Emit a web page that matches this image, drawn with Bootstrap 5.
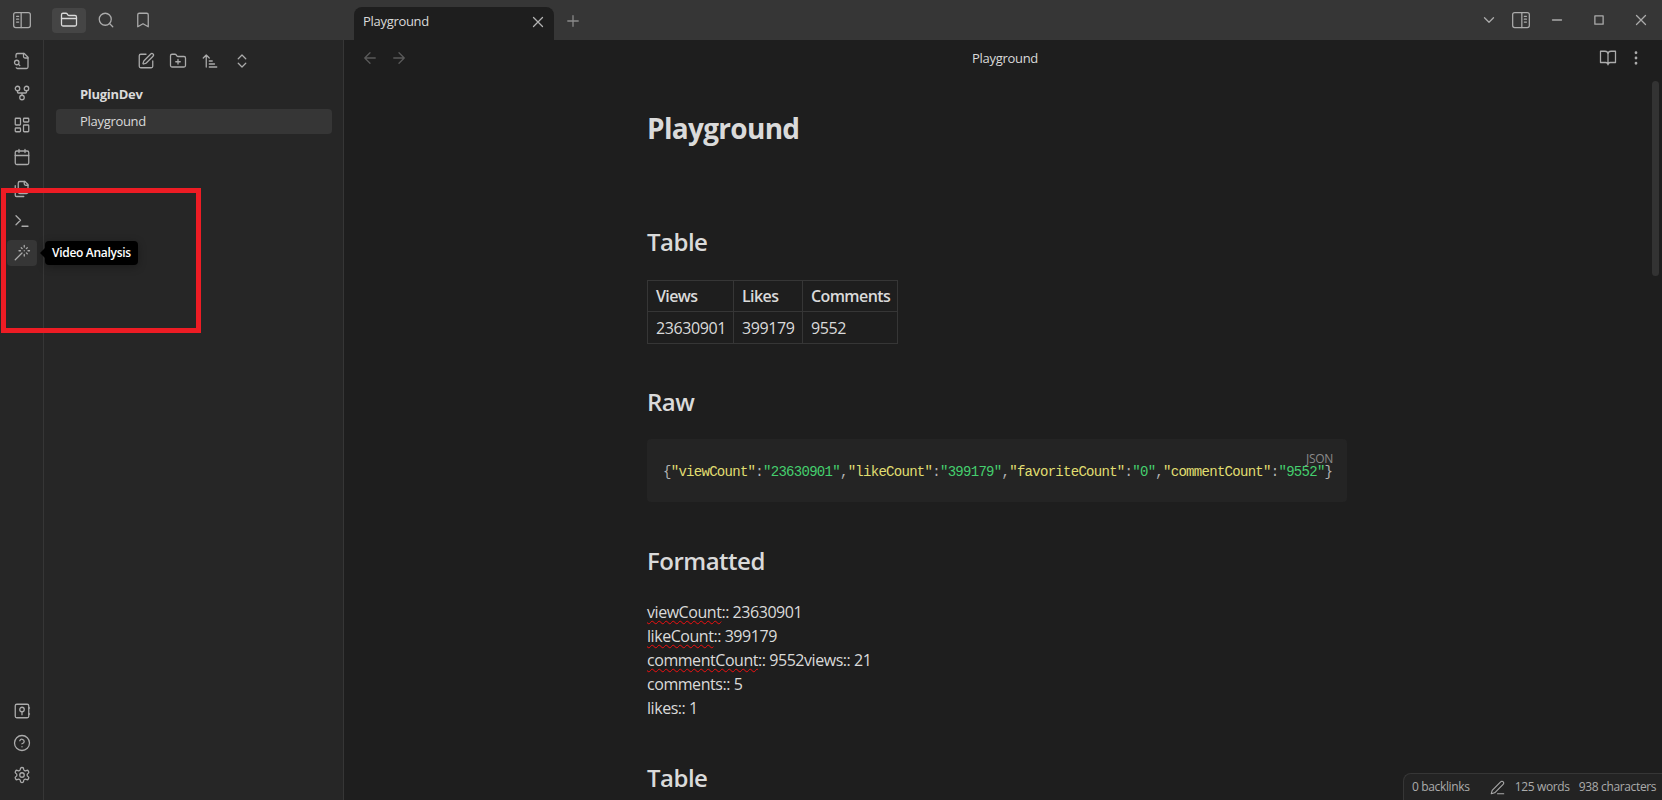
<!DOCTYPE html>
<html lang="en">
<head>
  <meta charset="UTF-8">
  <title>Playground - PluginDev</title>
  <link href="https://cdn.jsdelivr.net/npm/bootstrap@5.3.0/dist/css/bootstrap.min.css" rel="stylesheet">
  <style>
    html, body { height: 100%; overflow: hidden; }
    body {
      background: #1e1e1e;
      color: #dadada;
      font-family: "Open Sans", "Noto Sans", sans-serif;
      font-size: 16px;
      letter-spacing: -.45px;
    }
    .ico { width: 18px; height: 18px; fill: none; stroke: currentColor; stroke-width: 1.7; stroke-linecap: round; stroke-linejoin: round; flex: none; display: block; }
    .ico-wide { width: 20px; height: 20px; stroke-width: 1.5; }
    .app-shell { position: relative; height: 800px; }

    /* title bar */
    .title-bar { height: 40px; background: #363636; color: #ababab; }
    .title-left { width: 354px; padding-left: 12px; }
    .top-btn { width: 34px; height: 25px; border-radius: 4px; margin-right: 3px; }
    .top-btn.is-on { background: #454545; color: #dadada; }
    .top-gap { margin-left: 20px; }
    .tab-active { width: 200px; height: 33px; background: #1e1e1e; border-radius: 8px 8px 0 0; padding: 0 7px 3px 9px; margin-top: 7px; color: #dadada; font-size: 13px; letter-spacing: -.3px; }
    .tab-close { color: #b3b3b3; }
    .tab-plus { margin-left: 10px; padding-top: 2px; color: #8a8a8a; }
    .win-btn { width: 42px; color: #ababab; }
    .win-panel { width: 30px; }
    .win-chevron { margin-right: 8px; }

    /* ribbon */
    .ribbon { width: 44px; background: #262626; border-right: 1px solid #363636; padding-top: 8px; padding-bottom: 12px; color: #ababab; }
    .rib-btn { width: 30px; height: 26px; border-radius: 4px; margin-bottom: 6px; }
    .rib-btn:last-child { margin-bottom: 0; }
    .rib-btn.is-on { background: #363636; }

    /* file explorer */
    .file-pane { width: 300px; background: #262626; border-right: 1px solid #363636; padding: 8px 11px 0 12px; font-size: 13px; letter-spacing: -.3px; }
    .file-tools { height: 26px; gap: 14px; color: #ababab; margin-right: 1px; }
    .vault-name { font-weight: 700; padding: 11px 0 0 24px; height: 35px; line-height: 18px; }
    .file-row { height: 25px; background: #363636; border-radius: 4px; padding-left: 24px; line-height: 25px; font-weight: 500; }

    /* note */
    .note-pane { background: #1e1e1e; min-width: 0; }
    .view-head { height: 36px; padding: 0 17px 0 17px; font-size: 13px; letter-spacing: -.3px; }
    .view-arrows { color: #5a5a5a; gap: 11px; width: 50px; }
    .view-title { color: #dadada; margin-top: 1px; }
    .view-acts { color: #ababab; gap: 10px; }
    .note-scroll { height: 724px; overflow: hidden; padding-right: 12px; }
    .note-body { width: 700px; margin: 0 auto; padding-top: 30px; }
    .note-body h1 { font-size: 28px; font-weight: 700; line-height: 44px; margin: 0 0 75px; letter-spacing: -.7px; }
    .note-body h2 { font-size: 24px; font-weight: 600; line-height: 34px; margin: 0 0 20px; letter-spacing: -.5px; }
    .note-body h2.table-head { margin-bottom: 21px; }
    .stat-table { width: 250px; table-layout: fixed; margin: 0 0 41px; --bs-table-bg: transparent; --bs-table-color: #dadada; --bs-border-color: #363636; font-size: 16px; }
    .stat-table th, .stat-table td { padding: 0 8px; vertical-align: middle; }
    .stat-table th { height: 31px; font-weight: 600; letter-spacing: -.6px; }
    .stat-table td { height: 32px; font-weight: 400; letter-spacing: -.4px; }
    .col-views { width: 86px; }
    .col-likes { width: 69px; }
    .col-comments { width: 95px; }
    .code-box { background: #242424; border-radius: 4px; height: 63px; padding: 13px 14px 0 16px; margin-bottom: 42px; white-space: nowrap; }
    .code-lang { font-size: 12px; line-height: 13px; letter-spacing: -.3px; color: #8a8a8a; text-align: right; }
    .code-line { display: block; margin-top: -1px; font-family: "Liberation Mono", monospace; font-size: 14px; line-height: 17px; letter-spacing: -.71px; color: #b3b3b3; }
    .tok-key { color: #e0de71; }
    .tok-val { color: #44cf6e; }
    .data-lines { line-height: 24px; margin-top: 22px; margin-bottom: 41px; }
    .typo { text-decoration: underline wavy #f01010 1px; text-underline-offset: 2px; text-decoration-skip-ink: none; }

    /* overlays */
    .scroll-thumb { position: absolute; right: 3px; top: 81px; width: 7px; height: 195px; border-radius: 4px; background: #333; }
    .status-bar { position: absolute; right: 0; bottom: 0; height: 27px; width: 259px; background: #232323; border: 1px solid #363636; border-width: 1px 0 0 1px; border-top-left-radius: 8px; color: #ababab; font-size: 12px; letter-spacing: -.35px; padding-left: 8px; }
    .status-pen { width: 15px; height: 15px; margin-left: 20px; margin-right: 10px; }
    .status-gap { margin-left: 9px; }
    .hint-tip { position: absolute; left: 45px; top: 241px; height: 24px; padding: 0 7px; background: #000; color: #fff; border-radius: 4px; font-size: 12px; font-weight: 600; letter-spacing: -.3px; line-height: 24px; white-space: nowrap; box-shadow: 0 2px 8px rgba(0,0,0,.3); }
    .hint-tip::before { content: ""; position: absolute; left: -5px; top: 7px; border: 5px solid transparent; border-left: 0; border-right-color: #000; }
    .red-frame { position: absolute; left: 1px; top: 188px; width: 200px; height: 145px; border: 5px solid #ed1c24; pointer-events: none; }
  </style>
</head>
<body>

<svg width="0" height="0" class="position-absolute">
  <symbol id="i-side-left" viewBox="0 0 24 24"><rect x="2" y="3" width="20" height="18" rx="2.5"/><path d="M11 3v18M5.5 7.5h2.5M5.5 11h2.5M5.5 14.500h2.500"/></symbol>
  <symbol id="i-side-right" viewBox="0 0 24 24"><rect x="2" y="3" width="20" height="18" rx="2.5"/><path d="M13 3v18M16 7.500h2.500M16 11h2.500M16 14.500h2.500"/></symbol>
  <symbol id="i-folder" viewBox="0 0 24 24"><path d="M20 20a2 2 0 0 0 2-2V8a2 2 0 0 0-2-2h-7.900a2 2 0 0 1-1.690-.9L9.600 3.900A2 2 0 0 0 7.930 3H4a2 2 0 0 0-2 2v13a2 2 0 0 0 2 2Z"/><path d="M2 10h20"/></symbol>
  <symbol id="i-search" viewBox="0 0 24 24"><circle cx="11" cy="11" r="8"/><path d="m21 21-4.300-4.300"/></symbol>
  <symbol id="i-bookmark" viewBox="0 0 24 24"><path d="m19 21-7-4-7 4V5a2 2 0 0 1 2-2h10a2 2 0 0 1 2 2v16z"/></symbol>
  <symbol id="i-x" viewBox="0 0 24 24"><path d="M18 6 6 18M6 6l12 12"/></symbol>
  <symbol id="i-plus" viewBox="0 0 24 24"><path d="M5 12h14M12 5v14"/></symbol>
  <symbol id="i-chev" viewBox="0 0 24 24"><path d="m6 9 6 6 6-6"/></symbol>
  <symbol id="i-min" viewBox="0 0 24 24"><path d="M6 12h12"/></symbol>
  <symbol id="i-max" viewBox="0 0 24 24"><rect x="6.500" y="6.500" width="11" height="11"/></symbol>
  <symbol id="i-file-search" viewBox="0 0 24 24"><path d="M14 2v4a2 2 0 0 0 2 2h4"/><path d="M4.270 21a2 2 0 0 0 1.730 1H18a2 2 0 0 0 2-2V7l-5-5H6a2 2 0 0 0-2 2v3"/><path d="m9 18-1.500-1.500"/><circle cx="5" cy="14" r="3"/></symbol>
  <symbol id="i-graph" viewBox="0 0 24 24"><circle cx="12" cy="18" r="3"/><circle cx="6" cy="6" r="3"/><circle cx="18" cy="6" r="3"/><path d="M18 9v2c0 .6-.4 1-1 1H7c-.6 0-1-.4-1-1V9M12 12v3"/></symbol>
  <symbol id="i-canvas" viewBox="0 0 24 24"><rect x="3" y="3" width="7" height="9" rx="1"/><rect x="14" y="3" width="7" height="5" rx="1"/><rect x="14" y="12" width="7" height="9" rx="1"/><rect x="3" y="16" width="7" height="5" rx="1"/></symbol>
  <symbol id="i-calendar" viewBox="0 0 24 24"><path d="M8 2v4M16 2v4"/><rect x="3" y="4" width="18" height="18" rx="2"/><path d="M3 10h18"/></symbol>
  <symbol id="i-files" viewBox="0 0 24 24"><path d="M20 7h-3a2 2 0 0 1-2-2V2"/><path d="M9 18a2 2 0 0 1-2-2V4a2 2 0 0 1 2-2h7l4 4v10a2 2 0 0 1-2 2Z"/><path d="M3 7.600v12.800A1.600 1.600 0 0 0 4.600 22h9.800"/></symbol>
  <symbol id="i-term" viewBox="0 0 24 24"><path d="m4 17 6-6-6-6M12 19h8"/></symbol>
  <symbol id="i-wand" viewBox="0 0 24 24"><path d="M15 4V2M15 16v-2M8 9h2M20 9h2M17.800 11.800 19 13M15 9h.01M17.800 6.200 19 5M3 21l9-9M12.200 6.200 11 5"/></symbol>
  <symbol id="i-vault" viewBox="0 0 24 24"><rect x="3" y="3" width="18" height="18" rx="2"/><circle cx="12" cy="10" r="3"/><path d="M12 13v4M21 8h1M21 16h1"/></symbol>
  <symbol id="i-help" viewBox="0 0 24 24"><circle cx="12" cy="12" r="10"/><path d="M9.090 9a3 3 0 0 1 5.830 1c0 2-3 3-3 3M12 17h.01"/></symbol>
  <symbol id="i-gear" viewBox="0 0 24 24"><path d="M12.220 2h-.44a2 2 0 0 0-2 2v.18a2 2 0 0 1-1 1.730l-.43.25a2 2 0 0 1-2 0l-.15-.08a2 2 0 0 0-2.730.73l-.22.38a2 2 0 0 0 .73 2.730l.15.1a2 2 0 0 1 1 1.720v.51a2 2 0 0 1-1 1.740l-.15.09a2 2 0 0 0-.73 2.730l.22.38a2 2 0 0 0 2.730.73l.15-.08a2 2 0 0 1 2 0l.43.25a2 2 0 0 1 1 1.730V20a2 2 0 0 0 2 2h.44a2 2 0 0 0 2-2v-.18a2 2 0 0 1 1-1.730l.43-.25a2 2 0 0 1 2 0l.15.08a2 2 0 0 0 2.730-.73l.22-.39a2 2 0 0 0-.73-2.730l-.15-.08a2 2 0 0 1-1-1.740v-.5a2 2 0 0 1 1-1.740l.15-.09a2 2 0 0 0 .73-2.730l-.22-.38a2 2 0 0 0-2.730-.73l-.15.08a2 2 0 0 1-2 0l-.43-.25a2 2 0 0 1-1-1.730V4a2 2 0 0 0-2-2z"/><circle cx="12" cy="12" r="3"/></symbol>
  <symbol id="i-edit" viewBox="0 0 24 24"><path d="M12 3H5a2 2 0 0 0-2 2v14a2 2 0 0 0 2 2h14a2 2 0 0 0 2-2v-7"/><path d="M18.380 2.630a1 1 0 0 1 3 3l-9.010 9.010a2 2 0 0 1-.85.51l-2.870.84a.5.5 0 0 1-.62-.62l.84-2.870a2 2 0 0 1 .51-.85z"/></symbol>
  <symbol id="i-folder-plus" viewBox="0 0 24 24"><path d="M12 10v6M9 13h6"/><path d="M20 20a2 2 0 0 0 2-2V8a2 2 0 0 0-2-2h-7.900a2 2 0 0 1-1.690-.9L9.600 3.900A2 2 0 0 0 7.930 3H4a2 2 0 0 0-2 2v13a2 2 0 0 0 2 2Z"/></symbol>
  <symbol id="i-sort" viewBox="0 0 24 24"><path d="m3 8 4-4 4 4M7 4v16M11 12h4M11 16h7M11 20h10"/></symbol>
  <symbol id="i-updown" viewBox="0 0 24 24"><path d="m7 15 5 5 5-5M7 9l5-5 5 5"/></symbol>
  <symbol id="i-left" viewBox="0 0 24 24"><path d="m12 19-7-7 7-7M19 12H5"/></symbol>
  <symbol id="i-right" viewBox="0 0 24 24"><path d="M5 12h14M12 5l7 7-7 7"/></symbol>
  <symbol id="i-book" viewBox="0 0 24 24"><path d="M2 3h6a4 4 0 0 1 4 4v14a3 3 0 0 0-3-3H2zM22 3h-6a4 4 0 0 0-4 4v14a3 3 0 0 1 3-3h7z"/></symbol>
  <symbol id="i-dots" viewBox="0 0 24 24"><circle cx="12" cy="5" r="1"/><circle cx="12" cy="12" r="1"/><circle cx="12" cy="19" r="1"/></symbol>
  <symbol id="i-pen" viewBox="0 0 24 24"><path d="M17 3a2.850 2.830 0 1 1 4 4L7.500 20.500 2 22l1.500-5.500ZM12 22h10"/></symbol>
</svg>

<div class="app-shell d-flex flex-column">

  <header class="title-bar d-flex align-items-start flex-shrink-0">
    <div class="title-left d-flex align-items-center h-100">
      <svg class="ico ico-wide"><use href="#i-side-left"/></svg>
      <div class="top-btn is-on d-flex align-items-center justify-content-center top-gap"><svg class="ico"><use href="#i-folder"/></svg></div>
      <div class="top-btn d-flex align-items-center justify-content-center"><svg class="ico"><use href="#i-search"/></svg></div>
      <div class="top-btn d-flex align-items-center justify-content-center"><svg class="ico"><use href="#i-bookmark"/></svg></div>
    </div>
    <div class="tab-active d-flex align-items-center justify-content-between">
      <span>Playground</span>
      <svg class="ico tab-close"><use href="#i-x"/></svg>
    </div>
    <div class="d-flex align-items-center h-100 tab-plus"><svg class="ico"><use href="#i-plus"/></svg></div>
    <div class="d-flex align-items-center h-100 ms-auto">
      <svg class="ico win-chevron"><use href="#i-chev"/></svg>
      <div class="win-btn win-panel d-flex justify-content-center"><svg class="ico ico-wide"><use href="#i-side-right"/></svg></div>
      <div class="win-btn d-flex justify-content-center"><svg class="ico"><use href="#i-min"/></svg></div>
      <div class="win-btn d-flex justify-content-center"><svg class="ico"><use href="#i-max"/></svg></div>
      <div class="win-btn d-flex justify-content-center"><svg class="ico"><use href="#i-x"/></svg></div>
    </div>
  </header>

  <div class="d-flex flex-grow-1 overflow-hidden">
    <nav class="ribbon d-flex flex-column align-items-center flex-shrink-0">
      <div class="rib-btn d-flex align-items-center justify-content-center"><svg class="ico"><use href="#i-file-search"/></svg></div>
      <div class="rib-btn d-flex align-items-center justify-content-center"><svg class="ico"><use href="#i-graph"/></svg></div>
      <div class="rib-btn d-flex align-items-center justify-content-center"><svg class="ico"><use href="#i-canvas"/></svg></div>
      <div class="rib-btn d-flex align-items-center justify-content-center"><svg class="ico"><use href="#i-calendar"/></svg></div>
      <div class="rib-btn d-flex align-items-center justify-content-center"><svg class="ico"><use href="#i-files"/></svg></div>
      <div class="rib-btn d-flex align-items-center justify-content-center"><svg class="ico"><use href="#i-term"/></svg></div>
      <div class="rib-btn is-on d-flex align-items-center justify-content-center"><svg class="ico"><use href="#i-wand"/></svg></div>
      <div class="mt-auto d-flex flex-column align-items-center">
        <div class="rib-btn d-flex align-items-center justify-content-center"><svg class="ico"><use href="#i-vault"/></svg></div>
        <div class="rib-btn d-flex align-items-center justify-content-center"><svg class="ico"><use href="#i-help"/></svg></div>
        <div class="rib-btn d-flex align-items-center justify-content-center"><svg class="ico"><use href="#i-gear"/></svg></div>
      </div>
    </nav>

    <aside class="file-pane flex-shrink-0">
      <div class="file-tools d-flex align-items-center justify-content-center">
        <svg class="ico"><use href="#i-edit"/></svg>
        <svg class="ico"><use href="#i-folder-plus"/></svg>
        <svg class="ico"><use href="#i-sort"/></svg>
        <svg class="ico"><use href="#i-updown"/></svg>
      </div>
      <div class="vault-name">PluginDev</div>
      <div class="file-row">Playground</div>
    </aside>

    <main class="note-pane flex-grow-1">
      <div class="view-head d-flex align-items-center justify-content-between">
        <div class="view-arrows d-flex">
          <svg class="ico"><use href="#i-left"/></svg>
          <svg class="ico"><use href="#i-right"/></svg>
        </div>
        <div class="view-title">Playground</div>
        <div class="view-acts d-flex">
          <svg class="ico"><use href="#i-book"/></svg>
          <svg class="ico"><use href="#i-dots"/></svg>
        </div>
      </div>
      <div class="note-scroll">
        <article class="note-body">
          <h1>Playground</h1>
          <h2 class="table-head">Table</h2>
          <table class="table table-bordered stat-table">
            <thead>
              <tr><th class="col-views">Views</th><th class="col-likes">Likes</th><th class="col-comments">Comments</th></tr>
            </thead>
            <tbody>
              <tr><td>23630901</td><td>399179</td><td>9552</td></tr>
            </tbody>
          </table>
          <h2>Raw</h2>
          <div class="code-box">
            <div class="code-lang">JSON</div>
            <code class="code-line">{<span class="tok-key">"viewCount"</span>:<span class="tok-val">"23630901"</span>,<span class="tok-key">"likeCount"</span>:<span class="tok-val">"399179"</span>,<span class="tok-key">"favoriteCount"</span>:<span class="tok-val">"0"</span>,<span class="tok-key">"commentCount"</span>:<span class="tok-val">"9552"</span>}</code>
          </div>
          <h2>Formatted</h2>
          <div class="data-lines">
            <div><span class="typo">viewCount</span>:: 23630901</div>
            <div><span class="typo">likeCount</span>:: 399179</div>
            <div><span class="typo">commentCount</span>:: 9552views:: 21</div>
            <div>comments:: 5</div>
            <div>likes:: 1</div>
          </div>
          <h2>Table</h2>
        </article>
      </div>
    </main>
  </div>

  <div class="scroll-thumb"></div>
  <div class="status-bar d-flex align-items-center">
    <span>0 backlinks</span>
    <svg class="ico status-pen"><use href="#i-pen"/></svg>
    <span>125 words</span>
    <span class="status-gap">938 characters</span>
  </div>
  <div class="hint-tip">Video Analysis</div>
  <div class="red-frame"></div>
</div>

</body>
</html>
